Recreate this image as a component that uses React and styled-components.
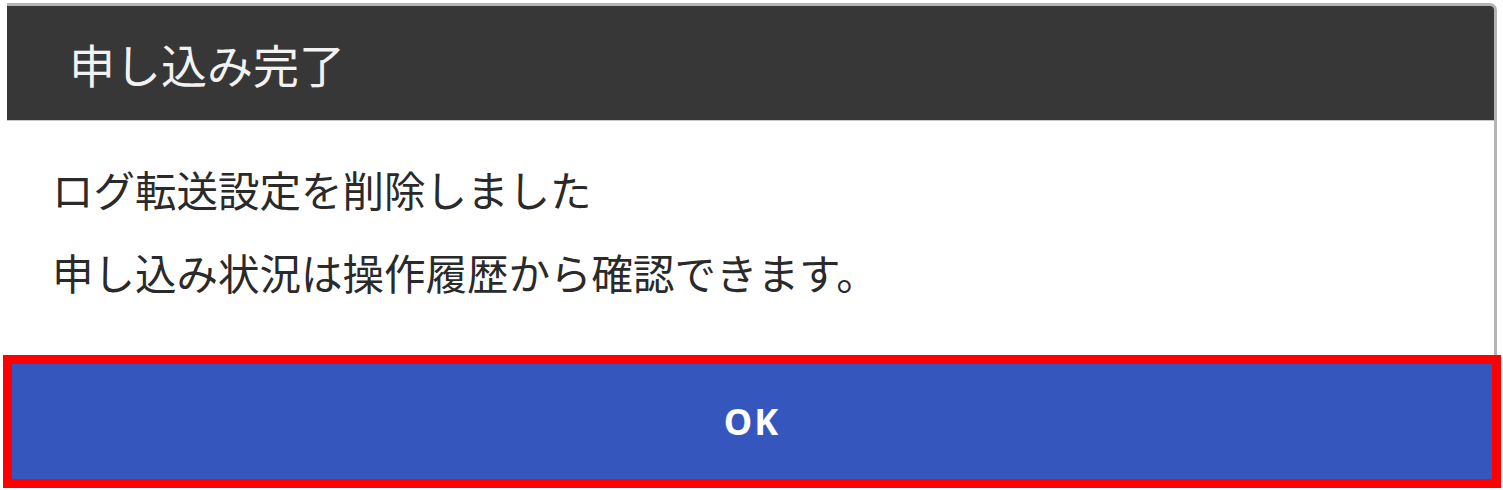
import React from "react";
import styled, { createGlobalStyle } from "styled-components";

const Global = createGlobalStyle`
  html, body {
    margin: 0;
    padding: 0;
    background: #ffffff;
  }
  body {
    font-family: "Noto Sans CJK JP", "Noto Sans", sans-serif;
  }
`;

const Page = styled.div`
  width: 1503px;
  height: 490px;
  display: flex;
  flex-direction: column;
  padding-top: 3px;
  box-sizing: border-box;
  overflow: hidden;
`;

const Card = styled.section`
  margin-left: 7px;
  width: 1490px;
  height: 352px;
  box-sizing: border-box;
  border-top: 3px solid #b4b4b4;
  border-right: 3px solid #b4b4b4;
  border-top-right-radius: 7px;
  background: #ffffff;
  display: flex;
  flex-direction: column;
  overflow: hidden;
`;

const Header = styled.header`
  height: 115px;
  flex: none;
  background: #373737;
  border-bottom: 1px solid #c8c8c8;
  display: flex;
  align-items: center;
  padding-left: 62px;
  box-sizing: border-box;
`;

const Title = styled.h2`
  margin: 0;
  font-family: "Noto Sans CJK JP", sans-serif;
  font-weight: 400;
  font-size: 46px;
  line-height: 1;
  color: #f2f2f2;
`;

const Body = styled.div`
  flex: 1;
  padding: 27px 0 0 45px;
  display: flex;
  flex-direction: column;
`;

const Message = styled.p`
  margin: 0;
  font-family: "Noto Sans CJK JP", sans-serif;
  font-size: 41.5px;
  line-height: 83px;
  color: #2a2a2a;
  white-space: nowrap;
`;

const Highlight = styled.div`
  margin-left: 3px;
  width: 1498px;
  height: 133px;
  box-sizing: border-box;
  border: 9px solid #ff0000;
  display: flex;
`;

const OkButton = styled.button`
  flex: 1;
  border: none;
  margin: 0;
  padding: 0;
  background: #3557bd;
  color: #ffffff;
  font-family: "Noto Sans", "Open Sans", sans-serif;
  font-weight: 700;
  font-size: 36px;
  letter-spacing: 2px;
  display: flex;
  align-items: center;
  justify-content: center;
  cursor: pointer;
`;

export default function App() {
  return (
    <>
      <Global />
      <Page>
        <Card>
          <Header>
            <Title>申し込み完了</Title>
          </Header>
          <Body>
            <Message>ログ転送設定を削除しました</Message>
            <Message>申し込み状況は操作履歴から確認できます。</Message>
          </Body>
        </Card>
        <Highlight>
          <OkButton type="button">OK</OkButton>
        </Highlight>
      </Page>
    </>
  );
}
